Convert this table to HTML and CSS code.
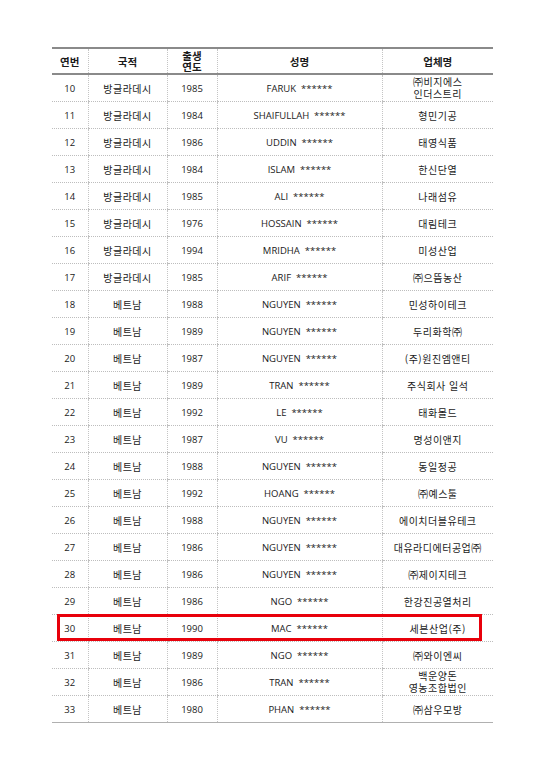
FILE: index.html
```html
<!DOCTYPE html>
<html lang="ko">
<head>
<meta charset="utf-8">
<link rel="stylesheet" href="styles.css">
</head>
<body>
<div class="wrap">
<table class="list">
<colgroup><col class="c1"><col class="c2"><col class="c3"><col class="c4"><col class="c5"></colgroup>
<thead>
<tr><th>연번</th><th>국적</th><th class="two">출생<br>연도</th><th>성명</th><th>업체명</th></tr>
</thead>
<tbody>
<tr><td>10</td><td>방글라데시</td><td>1985</td><td class="nm">FARUK  ******</td><td class="two">㈜비지에스<br>인더스트리</td></tr>
<tr><td>11</td><td>방글라데시</td><td>1984</td><td class="nm">SHAIFULLAH  ******</td><td>형민기공</td></tr>
<tr><td>12</td><td>방글라데시</td><td>1986</td><td class="nm">UDDIN  ******</td><td>태영식품</td></tr>
<tr><td>13</td><td>방글라데시</td><td>1984</td><td class="nm">ISLAM  ******</td><td>한신단열</td></tr>
<tr><td>14</td><td>방글라데시</td><td>1985</td><td class="nm">ALI  ******</td><td>나래섬유</td></tr>
<tr><td>15</td><td>방글라데시</td><td>1976</td><td class="nm">HOSSAIN  ******</td><td>대림테크</td></tr>
<tr><td>16</td><td>방글라데시</td><td>1994</td><td class="nm">MRIDHA  ******</td><td>미성산업</td></tr>
<tr><td>17</td><td>방글라데시</td><td>1985</td><td class="nm">ARIF  ******</td><td>㈜으뜸농산</td></tr>
<tr><td>18</td><td>베트남</td><td>1988</td><td class="nm">NGUYEN  ******</td><td>민성하이테크</td></tr>
<tr><td>19</td><td>베트남</td><td>1989</td><td class="nm">NGUYEN  ******</td><td>두리화학㈜</td></tr>
<tr><td>20</td><td>베트남</td><td>1987</td><td class="nm">NGUYEN  ******</td><td>(주)원진엠앤티</td></tr>
<tr><td>21</td><td>베트남</td><td>1989</td><td class="nm">TRAN  ******</td><td>주식회사  일석</td></tr>
<tr><td>22</td><td>베트남</td><td>1992</td><td class="nm">LE  ******</td><td>태화몰드</td></tr>
<tr><td>23</td><td>베트남</td><td>1987</td><td class="nm">VU  ******</td><td>명성이앤지</td></tr>
<tr><td>24</td><td>베트남</td><td>1988</td><td class="nm">NGUYEN  ******</td><td>동일정공</td></tr>
<tr><td>25</td><td>베트남</td><td>1992</td><td class="nm">HOANG  ******</td><td>㈜예스툴</td></tr>
<tr><td>26</td><td>베트남</td><td>1988</td><td class="nm">NGUYEN  ******</td><td>에이치더블유테크</td></tr>
<tr><td>27</td><td>베트남</td><td>1986</td><td class="nm">NGUYEN  ******</td><td>대유라디에터공업㈜</td></tr>
<tr><td>28</td><td>베트남</td><td>1986</td><td class="nm">NGUYEN  ******</td><td>㈜제이지테크</td></tr>
<tr><td>29</td><td>베트남</td><td>1986</td><td class="nm">NGO  ******</td><td>한강진공열처리</td></tr>
<tr><td>30</td><td>베트남</td><td>1990</td><td class="nm">MAC  ******</td><td>세븐산업(주)</td></tr>
<tr><td>31</td><td>베트남</td><td>1989</td><td class="nm">NGO  ******</td><td>㈜와이엔씨</td></tr>
<tr><td>32</td><td>베트남</td><td>1986</td><td class="nm">TRAN  ******</td><td class="two">백운양돈<br>영농조합법인</td></tr>
<tr><td>33</td><td>베트남</td><td>1980</td><td class="nm">PHAN  ******</td><td>㈜삼우모방</td></tr>
</tbody>
</table>
<div class="mark"></div>
</div>
</body>
</html>
```
FILE: styles.css
```css
html, body {
  margin: 0;
  padding: 0;
  background: #ffffff;
}
body {
  padding: 47px 0 0 52px;
  font-family: "Open Sans", "Noto Sans CJK KR", sans-serif;
  color: #1a1a1a;
}
.wrap {
  position: relative;
  width: 441px;
}
.list {
  border-collapse: collapse;
  table-layout: fixed;
  width: 441px;
  font-size: 9.5px;
}
.c1 { width: 36px; }
.c2 { width: 79px; }
.c3 { width: 50px; }
.c4 { width: 165px; }
.c5 { width: 111px; }
.list th {
  height: 24px;
  padding: 0;
  font-family: "Noto Sans CJK KR", sans-serif;
  font-weight: 700;
  font-size: 10.5px;
  border-top: 2px solid #8a8a8a;
  border-bottom: 2px solid #8a8a8a;
  border-left: 1px dotted #c4c4c4;
  line-height: 11px;
}
.list th.two { line-height: 11px; }
.list td {
  height: 26px;
  padding: 0;
  text-align: center;
  vertical-align: middle;
  border-bottom: 1px dotted #bdbdbd;
  border-left: 1px dotted #c4c4c4;
  line-height: 11px;
  white-space: nowrap;
}
.list th:first-child, .list td:first-child { border-left: none; }
.list tbody tr:last-child td { border-bottom: 1px solid #b0b0b0; }
.list td:nth-child(2), .list td:nth-child(5) {
  font-family: "Noto Sans CJK KR", sans-serif;
  font-size: 10px;
  letter-spacing: 0.5px;
}
.list td.two { line-height: 12.5px; }
.nm { white-space: pre !important; }
.mark {
  position: absolute;
  left: 5px;
  top: 567px;
  width: 425px;
  height: 27px;
  border: 3px solid #e8000b;
  box-sizing: border-box;
}
```
